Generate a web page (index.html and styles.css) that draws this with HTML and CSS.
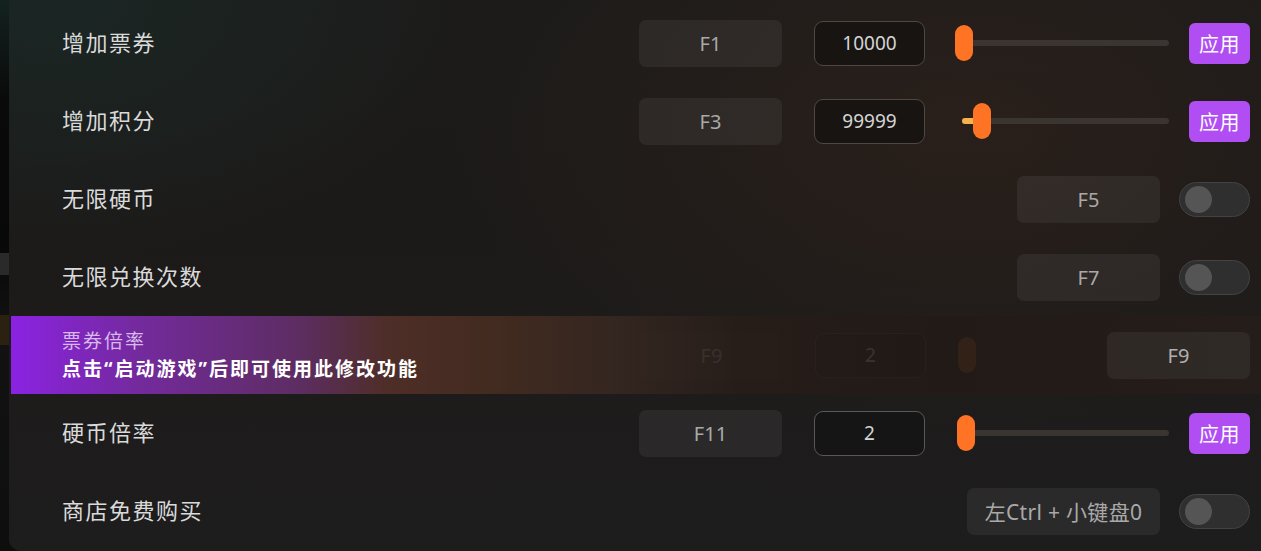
FILE: index.html
```html
<!DOCTYPE html>
<html lang="zh-CN">
<head>
<meta charset="utf-8">
<title>修改器</title>
<link rel="stylesheet" href="styles.css">
</head>
<body>
<div class="page">
  <div class="backdrop"><span class="bd-band"></span><span class="bd-warm"></span></div>
  <div class="panel">
    <div class="row">
      <div class="label">增加票券</div>
      <div class="key">F1</div>
      <div class="num">10000</div>
      <div class="slider"><span class="thumb"></span></div>
      <div class="apply">应用</div>
    </div>
    <div class="row">
      <div class="label">增加积分</div>
      <div class="key">F3</div>
      <div class="num">99999</div>
      <div class="slider"><span class="fill"></span><span class="thumb thumb-2"></span></div>
      <div class="apply">应用</div>
    </div>
    <div class="row">
      <div class="label">无限硬币</div>
      <div class="key">F5</div>
      <div class="toggle"><span class="knob"></span></div>
    </div>
    <div class="row">
      <div class="label">无限兑换次数</div>
      <div class="key">F7</div>
      <div class="toggle"><span class="knob"></span></div>
    </div>
    <div class="row row-locked">
      <div class="notice">
        <div class="notice-title">票券倍率</div>
        <div class="notice-text">点击“启动游戏”后即可使用此修改功能</div>
      </div>
      <div class="ghost">
        <div class="key">F9</div>
        <div class="num">2</div>
        <div class="slider slider-ghost"><span class="thumb"></span></div>
      </div>
      <div class="key key-wide">F9</div>
    </div>
    <div class="row">
      <div class="label">硬币倍率</div>
      <div class="key">F11</div>
      <div class="num num-dark">2</div>
      <div class="slider"><span class="thumb thumb-3"></span></div>
      <div class="apply">应用</div>
    </div>
    <div class="row">
      <div class="label">商店免费购买</div>
      <div class="key key-combo">左Ctrl + 小键盘0</div>
      <div class="toggle"><span class="knob"></span></div>
    </div>
  </div>
</div>
</body>
</html>
```

FILE: styles.css
```css
* { box-sizing: border-box; }

html, body {
  margin: 0;
  padding: 0;
  height: 551px;
  overflow: hidden;
}

body {
  background: #0b0b0b;
  font-family: "Noto Sans", "Noto Sans CJK SC", sans-serif;
}

.page {
  position: relative;
  display: flex;
  height: 551px;
  padding-left: 9px;
  background: linear-gradient(180deg, #132220 0%, #0a0a0a 18%, #080808 45%, #121212 60%, #0e0e0e 100%);
}

.backdrop {
  position: absolute;
  left: 0;
  top: 0;
  width: 9px;
  height: 551px;
}

.bd-band {
  position: absolute;
  left: 0;
  top: 253px;
  width: 9px;
  height: 22px;
  background: #2a2a2a;
}

.bd-warm {
  position: absolute;
  left: 0;
  top: 315px;
  width: 9px;
  height: 30px;
  background: #2a2110;
}

.panel {
  flex: 1;
  position: relative;
  padding: 4px 0 0 2px;
  border-radius: 0 0 0 12px;
  background:
    radial-gradient(ellipse 420px 260px at 40px 0px, rgba(26, 48, 44, 0.55), rgba(26, 48, 44, 0) 100%),
    radial-gradient(ellipse 520px 300px at 960px 130px, rgba(58, 38, 28, 0.45), rgba(58, 38, 28, 0) 100%),
    linear-gradient(180deg, #1c1b1a 0%, #1c1a19 40%, #1e1d1d 100%);
  overflow: hidden;
}

.row {
  height: 78px;
  display: flex;
  align-items: center;
  padding: 0 11px 0 51px;
}

.label {
  flex: 1;
  color: #dadada;
  font-family: "Noto Sans CJK SC", sans-serif;
  font-size: 22px;
  letter-spacing: 1.5px;
  margin-bottom: 4px;
}

.key {
  width: 143px;
  height: 47px;
  border-radius: 7px;
  background: rgba(255, 255, 255, 0.06);
  color: #a9a9a9;
  font-size: 20px;
  display: flex;
  align-items: center;
  justify-content: center;
}

.key-combo {
  width: 193px;
  font-family: "Noto Sans", "Noto Sans CJK SC", sans-serif;
  font-size: 21px;
  letter-spacing: 0.3px;
}

.num {
  width: 111px;
  height: 45px;
  margin-left: 32px;
  border: 1.5px solid #4e4843;
  border-radius: 9px;
  background: #171412;
  color: #d4d4d4;
  font-size: 19px;
  display: flex;
  align-items: center;
  justify-content: center;
}

.num-dark {
  background: #151515;
  border-color: #585858;
}

.slider {
  position: relative;
  width: 214px;
  height: 36px;
  margin-left: 30px;
}

.slider::before {
  content: "";
  position: absolute;
  left: 7px;
  right: 0;
  top: 15px;
  height: 6px;
  border-radius: 3px;
  background: #3b3532;
}

.fill {
  position: absolute;
  left: 7px;
  top: 15px;
  width: 14px;
  height: 6px;
  border-radius: 3px;
  background: #f7b24e;
  z-index: 1;
}

.thumb {
  position: absolute;
  left: 0;
  top: 0;
  width: 18px;
  height: 36px;
  border-radius: 9px;
  background: #ff7424;
  z-index: 2;
}

.thumb-2 { left: 18px; }
.thumb-3 { left: 2px; }

.apply {
  width: 61px;
  height: 41px;
  margin-left: 20px;
  border-radius: 6px;
  background: #b04ef4;
  color: #ffffff;
  font-family: "Noto Sans CJK SC", sans-serif;
  font-size: 20px;
  letter-spacing: 0.5px;
  display: flex;
  align-items: center;
  justify-content: center;
}

.toggle {
  position: relative;
  width: 71px;
  height: 35px;
  margin-left: 19px;
  border-radius: 18px;
  background: #2f2f2f;
  border: 1px solid #434343;
}

.knob {
  position: absolute;
  left: 5px;
  top: 3px;
  width: 27px;
  height: 27px;
  border-radius: 50%;
  background: #555555;
}

.row-locked {
  background: linear-gradient(90deg,
    #8b22e2 0%,
    #742a9e 10%,
    #5d2d62 23%,
    #4e2e28 30%,
    #432b20 38%,
    #342620 48%,
    #261d19 58%,
    #221a17 75%,
    #241d1a 100%);
}

.notice {
  flex: 1;
  font-family: "Noto Sans", "Noto Sans CJK SC", sans-serif;
  letter-spacing: 2px;
}

.notice-title {
  color: #d8b9ec;
  font-size: 19px;
  line-height: 28px;
}

.notice-text {
  color: #ffffff;
  font-size: 19px;
  font-weight: 700;
  line-height: 28px;
}

.ghost {
  display: flex;
  align-items: center;
  opacity: 0.12;
  width: 421px;
}

.slider-ghost {
  width: 20px;
}

.slider-ghost::before { display: none; }

.ghost .thumb { background: #a0581a; left: 2px; }

.key-wide {
  margin-left: 46px;
  width: 143px;
  color: #b0b0b0;
}
```
